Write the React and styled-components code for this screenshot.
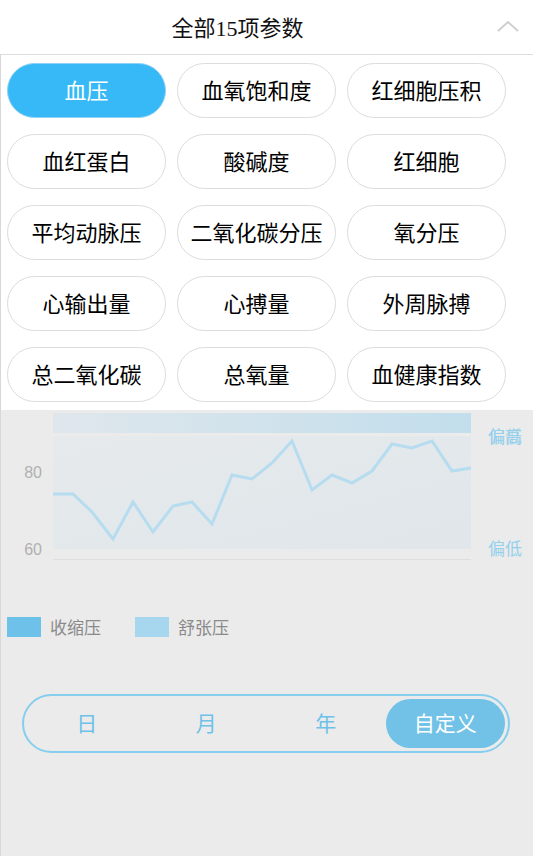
import React, { useState } from "react";
import styled, { createGlobalStyle } from "styled-components";

const params = [
  "血压", "血氧饱和度", "红细胞压积",
  "血红蛋白", "酸碱度", "红细胞",
  "平均动脉压", "二氧化碳分压", "氧分压",
  "心输出量", "心搏量", "外周脉搏",
  "总二氧化碳", "总氧量", "血健康指数",
];

const ranges = ["日", "月", "年", "自定义"];

// chart points, svg coordinates
const points = [
  [52, 84], [72, 84], [91, 102], [112, 129], [132, 92], [152, 122],
  [172, 96], [191, 92], [211, 114], [231, 65], [251, 69], [271, 53],
  [291, 31], [311, 80], [331, 65], [351, 73], [371, 61], [391, 34],
  [411, 38], [431, 31], [451, 61], [470, 58],
];

export default function App() {
  const [active, setActive] = useState(0);
  const [range, setRange] = useState(3);

  return (
    <Page>
      <GlobalStyle />
      <Header>
        <Title>全部15项参数</Title>
        <Toggle>
          <svg width="22" height="12" viewBox="0 0 22 12">
            <polyline points="1,11 11,2 21,11" fill="none" stroke="#cfcfcf" strokeWidth="2" />
          </svg>
        </Toggle>
      </Header>
      <ParamGrid>
        {params.map((p, i) => (
          <Pill key={p} $active={i === active} onClick={() => setActive(i)}>
            {p}
          </Pill>
        ))}
      </ParamGrid>
      <Body>
        <svg width="532" height="160" viewBox="0 0 532 160">
          <defs>
            <linearGradient id="band" x1="0" x2="1" y1="0" y2="0">
              <stop offset="0" stopColor="#dfe7ec" />
              <stop offset="1" stopColor="#c2deec" />
            </linearGradient>
            <linearGradient id="plot" x1="0" x2="1" y1="0" y2="1">
              <stop offset="0" stopColor="#e6eaed" />
              <stop offset="1" stopColor="#e0e6ea" />
            </linearGradient>
          </defs>
          <rect x="52" y="3" width="418" height="20" fill="url(#band)" />
          <rect x="52" y="26" width="418" height="113" fill="url(#plot)" />
          <line x1="52" x2="470" y1="149.5" y2="149.5" stroke="#dedede" />
          <polyline
            points={points.map((p) => p.join(",")).join(" ")}
            fill="none"
            stroke="#b6dcef"
            strokeWidth="3"
            strokeLinejoin="miter"
          />
          <AxisText x="41" y="68" textAnchor="end">80</AxisText>
          <AxisText x="41" y="145" textAnchor="end">60</AxisText>
          <LevelText x="487" y="33">偏高</LevelText>
          <LevelText x="487" y="33" opacity="0.7">偏低</LevelText>
          <LevelText x="487" y="145">偏低</LevelText>
        </svg>
        <Legend>
          <LegendItem>
            <Swatch $color="#6ec1e8" />
            收缩压
          </LegendItem>
          <LegendItem>
            <Swatch $color="#a6d7ef" />
            舒张压
          </LegendItem>
        </Legend>
        <Segmented>
          {ranges.map((r, i) => (
            <Segment key={r} $active={i === range} onClick={() => setRange(i)}>
              {r}
            </Segment>
          ))}
        </Segmented>
      </Body>
    </Page>
  );
}

const GlobalStyle = createGlobalStyle`
  body {
    margin: 0;
    background: #ebebeb;
    font-family: "Noto Sans CJK SC", "Noto Sans", sans-serif;
  }
`;

const Page = styled.div`
  min-height: 856px;
  background: #ebebeb;
  display: flex;
  flex-direction: column;
`;

const Header = styled.div`
  height: 55px;
  background: #fff;
  border-bottom: 1px solid #dcdcdc;
  display: flex;
  align-items: center;
  padding-bottom: 3px;
  box-sizing: border-box;
`;

const Title = styled.h1`
  flex: 1;
  margin: 0;
  text-align: center;
  font-family: "Liberation Serif", "Noto Sans CJK SC", serif;
  font-size: 22px;
  font-weight: 400;
  color: #111;
`;

const Toggle = styled.div`
  width: 58px;
  display: flex;
  justify-content: center;
  padding-left: 8px;
  box-sizing: border-box;
`;

const ParamGrid = styled.div`
  background: #fff;
  border-left: 1px solid #d8d8d8;
  padding: 8px 0 8px 6px;
  display: grid;
  grid-template-columns: repeat(3, 159px);
  column-gap: 11px;
  row-gap: 16px;
`;

const Pill = styled.div`
  height: 55px;
  box-sizing: border-box;
  padding-bottom: 4px;
  border-radius: 28px;
  border: 1.5px solid ${(p) => (p.$active ? "#8fd2f3" : "#dcdcdc")};
  background: ${(p) => (p.$active ? "#36b9f6" : "#fff")};
  color: ${(p) => (p.$active ? "#fff" : "#000")};
  font-size: 22px;
  display: flex;
  align-items: center;
  justify-content: center;
  cursor: pointer;
`;

const Body = styled.div`
  flex: 1;
  border-left: 1px solid #d8d8d8;
  display: flex;
  flex-direction: column;
  svg {
    display: block;
  }
`;

const AxisText = styled.text`
  font-family: "Liberation Sans", "Noto Sans", sans-serif;
  font-size: 16px;
  fill: #b0b0b0;
`;

const LevelText = styled.text`
  font-family: "Noto Sans CJK SC", sans-serif;
  font-size: 17px;
  fill: #94d0ec;
`;

const Legend = styled.div`
  margin-top: 47px;
  padding-left: 6px;
  display: flex;
  gap: 34px;
`;

const LegendItem = styled.div`
  display: flex;
  align-items: center;
  gap: 9px;
  font-size: 17px;
  color: #8a8a8a;
  line-height: 20px;
`;

const Swatch = styled.span`
  width: 34px;
  height: 20px;
  background: ${(p) => p.$color};
`;

const Segmented = styled.div`
  margin: 57px 0 0 21px;
  width: 488px;
  height: 59px;
  box-sizing: border-box;
  border: 2px solid #86cdee;
  border-radius: 30px;
  padding: 3px;
  display: flex;
`;

const Segment = styled.div`
  flex: 1;
  border-radius: 25px;
  padding-bottom: 3px;
  background: ${(p) => (p.$active ? "#72c2e8" : "transparent")};
  color: ${(p) => (p.$active ? "#fff" : "#6ec1e8")};
  font-size: 21px;
  display: flex;
  align-items: center;
  justify-content: center;
  cursor: pointer;
`;
